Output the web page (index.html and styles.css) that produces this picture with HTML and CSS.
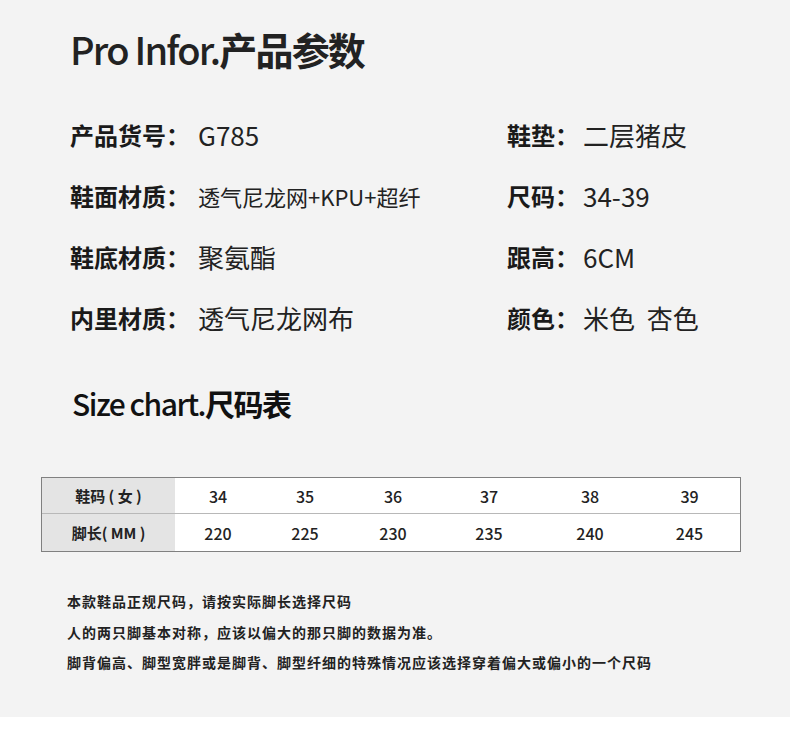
FILE: index.html
```html
<!DOCTYPE html>
<html lang="zh">
<head>
<meta charset="utf-8">
<link rel="stylesheet" href="styles.css">
</head>
<body>
<div class="page">
  <h1 class="title"><span class="lat">Pro Infor.</span><span class="cjk">产品参数</span></h1>
  <div class="info">
    <div class="item"><span class="lbl">产品货号：</span><span class="val">G785</span></div>
    <div class="item right"><span class="lbl">鞋垫：</span><span class="val">二层猪皮</span></div>
    <div class="item"><span class="lbl">鞋面材质：</span><span class="val small">透气尼龙网+KPU+超纤</span></div>
    <div class="item right"><span class="lbl">尺码：</span><span class="val">34-39</span></div>
    <div class="item"><span class="lbl">鞋底材质：</span><span class="val">聚氨酯</span></div>
    <div class="item right"><span class="lbl">跟高：</span><span class="val">6CM</span></div>
    <div class="item"><span class="lbl">内里材质：</span><span class="val">透气尼龙网布</span></div>
    <div class="item right"><span class="lbl">颜色：</span><span class="val">米色&nbsp;&nbsp;杏色</span></div>
  </div>
  <h2 class="subtitle"><span class="lat">Size chart.</span><span class="cjk">尺码表</span></h2>
  <div class="table">
    <div class="th">鞋码 ( 女 )</div>
    <div class="td">34</div><div class="td">35</div><div class="td">36</div><div class="td">37</div><div class="td">38</div><div class="td">39</div>
    <div class="th last">脚长( MM )</div>
    <div class="td last">220</div><div class="td last">225</div><div class="td last">230</div><div class="td last">235</div><div class="td last">240</div><div class="td last">245</div>
  </div>
  <div class="notes">
    <p>本款鞋品正规尺码，请按实际脚长选择尺码</p>
    <p>人的两只脚基本对称，应该以偏大的那只脚的数据为准。</p>
    <p>脚背偏高、脚型宽胖或是脚背、脚型纤细的特殊情况应该选择穿着偏大或偏小的一个尺码</p>
  </div>
</div>
</body>
</html>
```

FILE: styles.css
```css
* { box-sizing: border-box; }
html, body { margin: 0; padding: 0; background: #ffffff; }
body { font-family: "Noto Sans CJK SC", "Noto Sans", sans-serif; color: #1e1e1e; }
.page {
  width: 790px;
  height: 717px;
  background: #f3f3f3;
  padding: 24px 0 0 70px;
  display: flex;
  flex-direction: column;
}
.title {
  margin: 0;
  font-size: 38px;
  line-height: 50px;
  letter-spacing: -1.8px;
  color: #222;
}
.title .lat { font-weight: 500; }
.title .cjk { font-weight: 700; }
.info {
  margin-top: 30px;
  display: grid;
  grid-template-columns: 437px 1fr;
  grid-auto-rows: 61px;
}
.item {
  display: flex;
  align-items: center;
  height: 61px;
  font-size: 24px;
  white-space: nowrap;
}
.lbl { font-weight: 700; color: #1a1a1a; }
.val { font-size: 26px; font-weight: 400; color: #222; margin-left: 8px; }
.right .val { margin-left: 4px; }
.val.small { font-size: 22px; }
.subtitle {
  margin: 35px 0 0 2px;
  font-size: 30px;
  line-height: 40px;
  letter-spacing: -1.5px;
  color: #111;
}
.subtitle .lat { font-weight: 500; }
.subtitle .cjk { font-weight: 700; }
.table {
  margin: 54px 0 0 -29px;
  width: 700px;
  display: grid;
  grid-template-columns: 133px 86px 88px 88px 104px 98px 1fr;
  grid-template-rows: 36px 37px;
  border: 1px solid #808080;
  background: #ffffff;
}
.th, .td {
  display: flex;
  align-items: center;
  justify-content: center;
  font-size: 16px;
  font-weight: 500;
  color: #222;
  border-bottom: 1px solid #b8b8b8;
}
.th { background: #e4e4e4; font-weight: 700; font-size: 15px; }
.th.last, .td.last { border-bottom: none; }
.notes {
  margin: 34px 0 0 -3px;
  font-size: 14px;
  letter-spacing: 1px;
  font-weight: 700;
  color: #222;
}
.notes p { margin: 0; line-height: 30.5px; }
```
